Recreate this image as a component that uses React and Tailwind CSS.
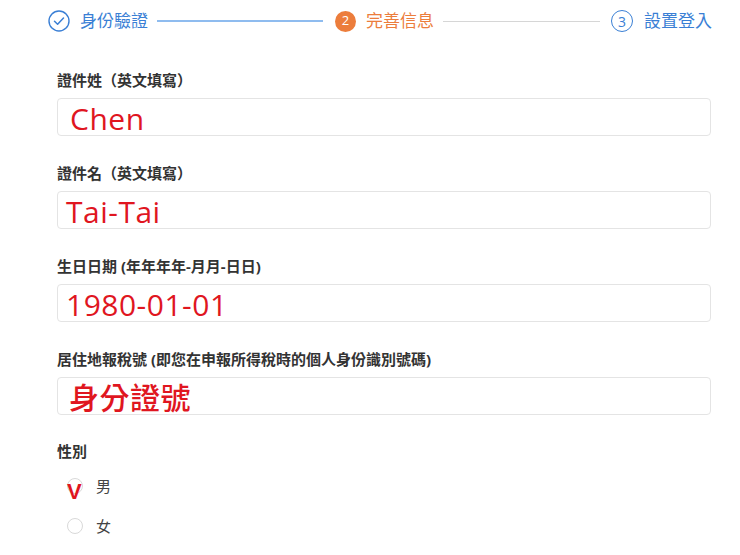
import React from 'react';

const fields = [
    { label: '證件姓（英文填寫）', value: 'Chen', pad: 'pl-[12px]' },
    { label: '證件名（英文填寫）', value: 'Tai-Tai', pad: 'pl-[8px]' },
    { label: '生日日期 (年年年年-月月-日日)', value: '1980-01-01', pad: 'pl-[8px]' },
    { label: '居住地報稅號 (即您在申報所得稅時的個人身份識別號碼)', value: '身分證號', pad: 'pl-[11px]' },
];

function Stepper() {
    return (
        <div className="flex items-center h-[42px] pl-[48px]">
            <svg width="22" height="22" viewBox="0 0 22 22" className="shrink-0">
                <circle cx="11" cy="11" r="10" fill="none" stroke="#3a7fd5" strokeWidth="1.4" />
                <path d="M6.5 11.3l3.1 3 5.9-6.3" fill="none" stroke="#3a7fd5" strokeWidth="1.5" strokeLinecap="round" strokeLinejoin="round" />
            </svg>
            <span className="ml-[10px] w-[67px] text-[17px] text-[#3a7fd5] whitespace-nowrap">身份驗證</span>
            <div className="ml-[10px] w-[166px] h-[2px] bg-[#8fbcef]" />
            <span className="ml-[12px] w-[21px] h-[21px] shrink-0 rounded-full bg-[#ec7d3c] text-white text-[13px] flex items-center justify-center">2</span>
            <span className="ml-[10px] w-[67px] text-[17px] text-[#ec7d3c] whitespace-nowrap">完善信息</span>
            <div className="ml-[10px] w-[157px] h-px bg-[#d6d6d6]" />
            <span className="ml-[11px] w-[22px] h-[22px] shrink-0 rounded-full border border-[#3a7fd5] text-[#3a7fd5] text-[14px] flex items-center justify-center">3</span>
            <span className="ml-[11px] text-[17px] text-[#3a7fd5] whitespace-nowrap">設置登入</span>
        </div>
    );
}

export default function App() {
    return (
        <div className="w-[740px] h-[555px] bg-white overflow-hidden font-['Open_Sans','Noto_Sans_CJK_TC',sans-serif]">
            <Stepper />
            <div className="pl-[57px] pr-[29px] pt-[28px]">
                {fields.map(f => (
                    <div key={f.label} className="mb-[27px]">
                        <div className="text-[15px] font-bold text-[#333] leading-[21px] mb-[7px]">{f.label}</div>
                        <div className={`h-[38px] border border-[#e4e4e4] rounded-[4px] flex items-center ${f.pad}`}>
                            <span className="text-[30px] font-medium tracking-[0.5px] leading-none text-[#e0161f] mt-[3px]">{f.value}</span>
                        </div>
                    </div>
                ))}
                <div className="text-[15px] font-bold text-[#333] leading-[20px] -mt-[1px]">性別</div>
                <div className="pl-[10px] mt-[15px]">
                    <div className="relative flex items-center h-[20px]">
                        <span className="w-[16px] h-[16px] rounded-full border border-[#d9d9d9] bg-white" />
                        <span className="ml-[13px] text-[15px] text-[#444]">男</span>
                        <span className="absolute left-[0px] top-[5px] text-[22px] font-bold text-[#e0161f] leading-none font-['Liberation_Sans',sans-serif]">V</span>
                    </div>
                    <div className="flex items-center h-[20px] mt-[20px]">
                        <span className="w-[16px] h-[16px] rounded-full border border-[#d9d9d9] bg-white" />
                        <span className="ml-[13px] text-[15px] text-[#444]">女</span>
                    </div>
                </div>
            </div>
        </div>
    );
}
